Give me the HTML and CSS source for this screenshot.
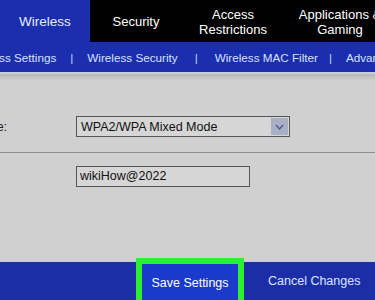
FILE: index.html
```html
<!DOCTYPE html>
<html lang="en">
<head>
    <meta charset="UTF-8">
    <meta name="viewport" content="width=device-width, initial-scale=1.0">
    <title>Wireless Security</title>
    <link rel="stylesheet" href="styles.css">
</head>
<body>
    <div class="page">
        <div class="tabs">
            <div class="tab active">Wireless</div>
            <div class="tab">Security</div>
            <div class="tab access">Access<br>Restrictions</div>
            <div class="tab apps">Applications &amp;<br>Gaming</div>
        </div>
        <div class="subnav">
            <span>Wireless Settings</span>
            <span class="sep">|</span>
            <span>Wireless Security</span>
            <span class="sep wide">|</span>
            <span>Wireless MAC Filter</span>
            <span class="sep tight">|</span>
            <span>Advanced Wireless Settings</span>
        </div>
        <div class="shade"></div>

        <div class="content">
            <div class="row">
                <label class="label">Security Mode:</label>
                <div class="select">
                    <span>WPA2/WPA Mixed Mode</span>
                    <span class="arrow">
                        <svg width="9" height="6" viewBox="0 0 9 6"><path d="M1 1 L4.5 5 L8 1" fill="none" stroke="#4a5a8a" stroke-width="1.3"/></svg>
                    </span>
                </div>
            </div>
            <div class="rule"></div>
            <div class="row">
                <label class="label hidden">Passphrase:</label>
                <div class="input">wikiHow@2022</div>
            </div>
        </div>

        <div class="footer">
            <button class="btn save">Save Settings</button>
            <button class="btn cancel">Cancel Changes</button>
        </div>
    </div>
</body>
</html>
```

FILE: styles.css
```css
body, html {
    margin: 0;
    padding: 0;
    width: 100%;
    height: 100%;
    overflow: hidden;
    font-family: "Liberation Sans", Arial, sans-serif;
    background: #d0d0d0;
}
.page {
    display: flex;
    flex-direction: column;
    height: 300px;
    width: 375px;
    overflow: hidden;
}
.tabs {
    display: flex;
    height: 42px;
    background: #000;
    flex-shrink: 0;
}
.tab {
    display: flex;
    justify-content: center;
    align-items: center;
    text-align: center;
    width: 92px;
    flex-shrink: 0;
    padding-top: 3px;
    box-sizing: border-box;
    color: #fff;
    font-size: 13px;
    line-height: 14.5px;
    white-space: nowrap;
}
.tab.active {
    width: 90px;
    background: #1a2eae;
    color: #e6ebff;
    font-size: 13.5px;
}
.tab.access {
    width: 102px;
}
.tab.apps {
    width: 112px;
}
.subnav {
    display: flex;
    align-items: center;
    gap: 14px;
    height: 30px;
    background: #1a2eae;
    color: #d8e0ff;
    font-size: 11.7px;
    white-space: nowrap;
    margin-left: -34px;
    padding-right: 200px;
    flex-shrink: 0;
}
.subnav .sep {
    color: #c8d0f0;
}
.subnav .sep.wide {
    margin: 0 3px;
}
.subnav .sep.tight {
    margin-left: -3px;
}
.shade {
    height: 8px;
    flex-shrink: 0;
    border-top: 2px solid #c9cdd8;
    background: linear-gradient(#b8b8b8, #cdcdcd);
    box-sizing: border-box;
}
.content {
    flex: 1;
    padding-top: 36px;
}
.row {
    display: flex;
    align-items: center;
    margin-left: -83px;
}
.label {
    width: 90px;
    text-align: right;
    margin-right: 69px;
    font-size: 12px;
    color: #222;
}
.label.hidden {
    visibility: hidden;
}
.select {
    display: flex;
    justify-content: space-between;
    align-items: center;
    width: 214px;
    height: 21px;
    box-sizing: border-box;
    border: 1px solid #555;
    background: #d6d6d6;
    padding-left: 4px;
    padding-right: 1px;
    font-size: 12.5px;
    color: #111;
}
.arrow {
    display: flex;
    justify-content: center;
    align-items: center;
    width: 17px;
    height: 17px;
    background: #a9b0c6;
}
.rule {
    height: 1px;
    background: #8e8e8e;
    margin: 15px 0 13px;
}
.input {
    width: 174px;
    height: 21px;
    box-sizing: border-box;
    border: 1px solid #555;
    background: #d6d6d6;
    padding-left: 3px;
    font-size: 12.5px;
    line-height: 19px;
    color: #111;
}
.footer {
    display: flex;
    align-items: flex-end;
    height: 42px;
    flex-shrink: 0;
    background: linear-gradient(#d0d0d0 0, #d0d0d0 3px, #c6cbe0 3px, #c6cbe0 4px, #1b2ea8 4px);
    padding-left: 136px;
}
.btn {
    font-family: "Liberation Sans", Arial, sans-serif;
    font-size: 12.5px;
    border: none;
    background: none;
    color: #dfe5ff;
    height: 38px;
    padding: 0;
}
.btn.save {
    width: 108px;
    height: 42px;
    border: 6px solid #2cf02c;
    border-bottom: none;
    background: #1b3acb;
    color: #fff;
    padding-top: 2px;
}
.btn.cancel {
    margin-left: 24px;
}
```
